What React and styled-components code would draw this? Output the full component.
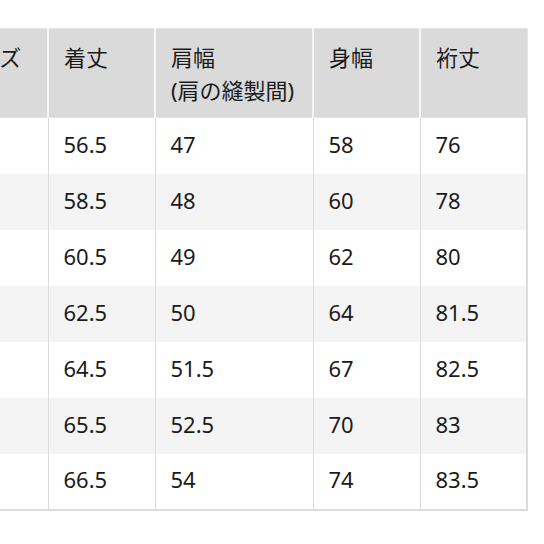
import styled, { createGlobalStyle } from 'styled-components';

const GlobalStyle = createGlobalStyle`
  html, body {
    margin: 0;
    padding: 0;
    background: #fff;
  }
  body {
    font-family: "Noto Sans", "Noto Sans CJK JP", sans-serif;
    color: #1b1b1b;
  }
`;

const columns = [
  { key: 'size', label: ['サイズ'], width: 108 },
  { key: 'length', label: ['着丈'], width: 107 },
  { key: 'shoulder', label: ['肩幅', '(肩の縫製間)'], width: 158 },
  { key: 'body', label: ['身幅'], width: 107 },
  { key: 'sleeve', label: ['裄丈'], width: 107 },
];

const rows = [
  ['XS', '56.5', '47', '58', '76'],
  ['S', '58.5', '48', '60', '78'],
  ['M', '60.5', '49', '62', '80'],
  ['L', '62.5', '50', '64', '81.5'],
  ['XL', '64.5', '51.5', '67', '82.5'],
  ['XXL', '65.5', '52.5', '70', '83'],
  ['3XL', '66.5', '54', '74', '83.5'],
];

const App = () => {
  return (
    <>
      <GlobalStyle />
      <Page>
        <SizeTable>
          <colgroup>
            {columns.map((c) => (
              <col key={c.key} style={{ width: c.width }} />
            ))}
          </colgroup>
          <thead>
            <tr>
              {columns.map((c) => (
                <HeadCell key={c.key}>
                  {c.label.map((line) => (
                    <HeadLine key={line}>{line}</HeadLine>
                  ))}
                </HeadCell>
              ))}
            </tr>
          </thead>
          <tbody>
            {rows.map((r, i) => (
              <Row key={r[0]} $striped={i % 2 === 1}>
                {r.map((v, j) => (
                  <Cell key={j}>{v}</Cell>
                ))}
              </Row>
            ))}
          </tbody>
        </SizeTable>
      </Page>
    </>
  );
};

const Page = styled.div`
  width: 544px;
  height: 544px;
  overflow: hidden;
  padding-top: 28px;
  box-sizing: border-box;
`;

const SizeTable = styled.table`
  margin-left: -61px;
  table-layout: fixed;
  border-collapse: collapse;
  width: 588px;
  font-size: 22px;
  line-height: 33px;
`;

const HeadCell = styled.th`
  background: #dadada;
  text-align: left;
  vertical-align: top;
  font-weight: 400;
  padding: 12px 14px 10px 15px;
  height: 89px;
  box-sizing: border-box;
  border: 1px solid #e4e4e4;
  border-left: 2px solid #f6f6f6;
  white-space: nowrap;
`;

const HeadLine = styled.div`
  display: block;
`;

const Row = styled.tr`
  background: ${(p) => (p.$striped ? '#f4f4f4' : '#fff')};
`;

const Cell = styled.td`
  height: 56px;
  box-sizing: border-box;
  padding: 0 15px 3px;
  vertical-align: middle;
  border: 1px solid #dcdcdc;
  border-top: none;
  border-bottom: none;
  &:last-child {
    border-right: 2px solid #dcdcdc;
  }
  tr:last-child > & {
    border-bottom: 2px solid #dcdcdc;
  }
`;

export default App;
